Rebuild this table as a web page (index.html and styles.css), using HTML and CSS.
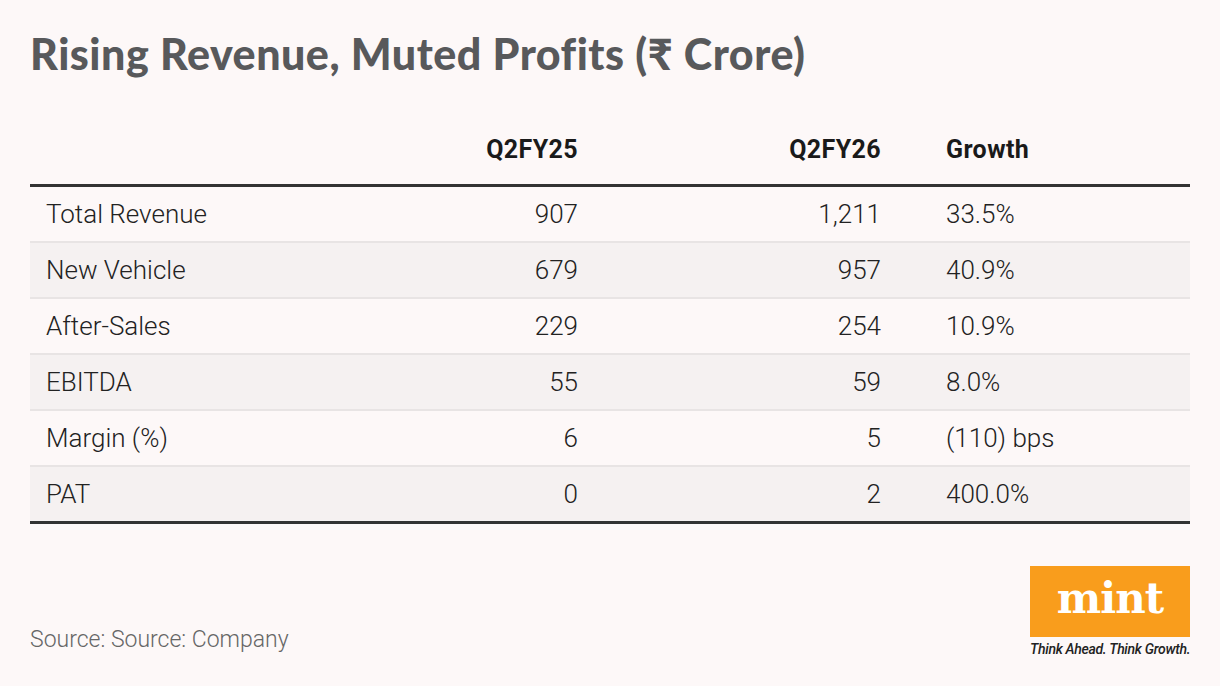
FILE: index.html
```html
<!DOCTYPE html>
<html>
<head>
<meta charset="utf-8">
<link rel="stylesheet" href="styles.css">
</head>
<body>
<div class="page">
  <h1 class="title">Rising Revenue, Muted Profits (₹ Crore)</h1>
  <div class="table">
    <div class="row head">
      <div class="c1"></div>
      <div class="c2">Q2FY25</div>
      <div class="c3">Q2FY26</div>
      <div class="c4">Growth</div>
    </div>
    <div class="row"><div class="c1">Total Revenue</div><div class="c2">907</div><div class="c3">1,211</div><div class="c4">33.5%</div></div>
    <div class="row alt"><div class="c1">New Vehicle</div><div class="c2">679</div><div class="c3">957</div><div class="c4">40.9%</div></div>
    <div class="row"><div class="c1">After-Sales</div><div class="c2">229</div><div class="c3">254</div><div class="c4">10.9%</div></div>
    <div class="row alt"><div class="c1">EBITDA</div><div class="c2">55</div><div class="c3">59</div><div class="c4">8.0%</div></div>
    <div class="row"><div class="c1">Margin (%)</div><div class="c2">6</div><div class="c3">5</div><div class="c4">(110) bps</div></div>
    <div class="row alt last"><div class="c1">PAT</div><div class="c2">0</div><div class="c3">2</div><div class="c4">400.0%</div></div>
  </div>
  <div class="footer">
    <div class="source">Source: Source: Company</div>
    <div class="logo">
      <div class="logo-box">mint</div>
      <div class="tagline">Think Ahead. Think Growth.</div>
    </div>
  </div>
</div>
</body>
</html>
```
FILE: styles.css
```css
html, body {
  margin: 0;
  padding: 0;
  background: #fdf8f8;
}
.page {
  width: 1220px;
  height: 686px;
  box-sizing: border-box;
  padding: 28px 30px 0 30px;
  font-family: Roboto, "Open Sans", sans-serif;
}
.title {
  margin: 0;
  font-family: Lato, "Open Sans", sans-serif;
  font-weight: 900;
  font-size: 43px;
  line-height: 52px;
  color: #58595b;
  letter-spacing: 0.5px;
}
.table {
  margin-top: 34px;
  width: 1160px;
}
.row {
  display: grid;
  grid-template-columns: 402px 130px 303px 1fr;
  padding-left: 16px;
  height: 54px;
  align-items: center;
  font-weight: 300;
  font-size: 26px;
  color: #222;
  border-bottom: 2px solid #e8e4e4;
}
.row.head {
  height: 70px;
  font-weight: 700;
  font-size: 25px;
  letter-spacing: 0.4px;
  color: #1a1a1a;
  border-bottom: 3px solid #333;
}
.row.alt {
  background: #f5f1f1;
}
.row.last {
  border-bottom: 3px solid #333;
}
.c2, .c3 {
  text-align: right;
}
.c4 {
  padding-left: 65px;
}
.footer {
  display: flex;
  justify-content: space-between;
  align-items: flex-end;
  margin-top: 42px;
}
.source {
  font-weight: 300;
  font-size: 23px;
  color: #666;
  padding-bottom: 4px;
}
.logo {
  width: 160px;
  display: flex;
  flex-direction: column;
}
.logo-box {
  height: 71px;
  background: #f99d1c;
  color: #fff;
  font-family: "DejaVu Serif", serif;
  font-weight: 700;
  font-size: 42px;
  display: flex;
  align-items: center;
  justify-content: center;
  padding-bottom: 6px;
  box-sizing: border-box;
  letter-spacing: -1px;
}
.tagline {
  margin-top: 4px;
  font-style: italic;
  font-weight: 500;
  font-size: 14px;
  color: #222;
  white-space: nowrap;
  letter-spacing: -0.3px;
}
```
